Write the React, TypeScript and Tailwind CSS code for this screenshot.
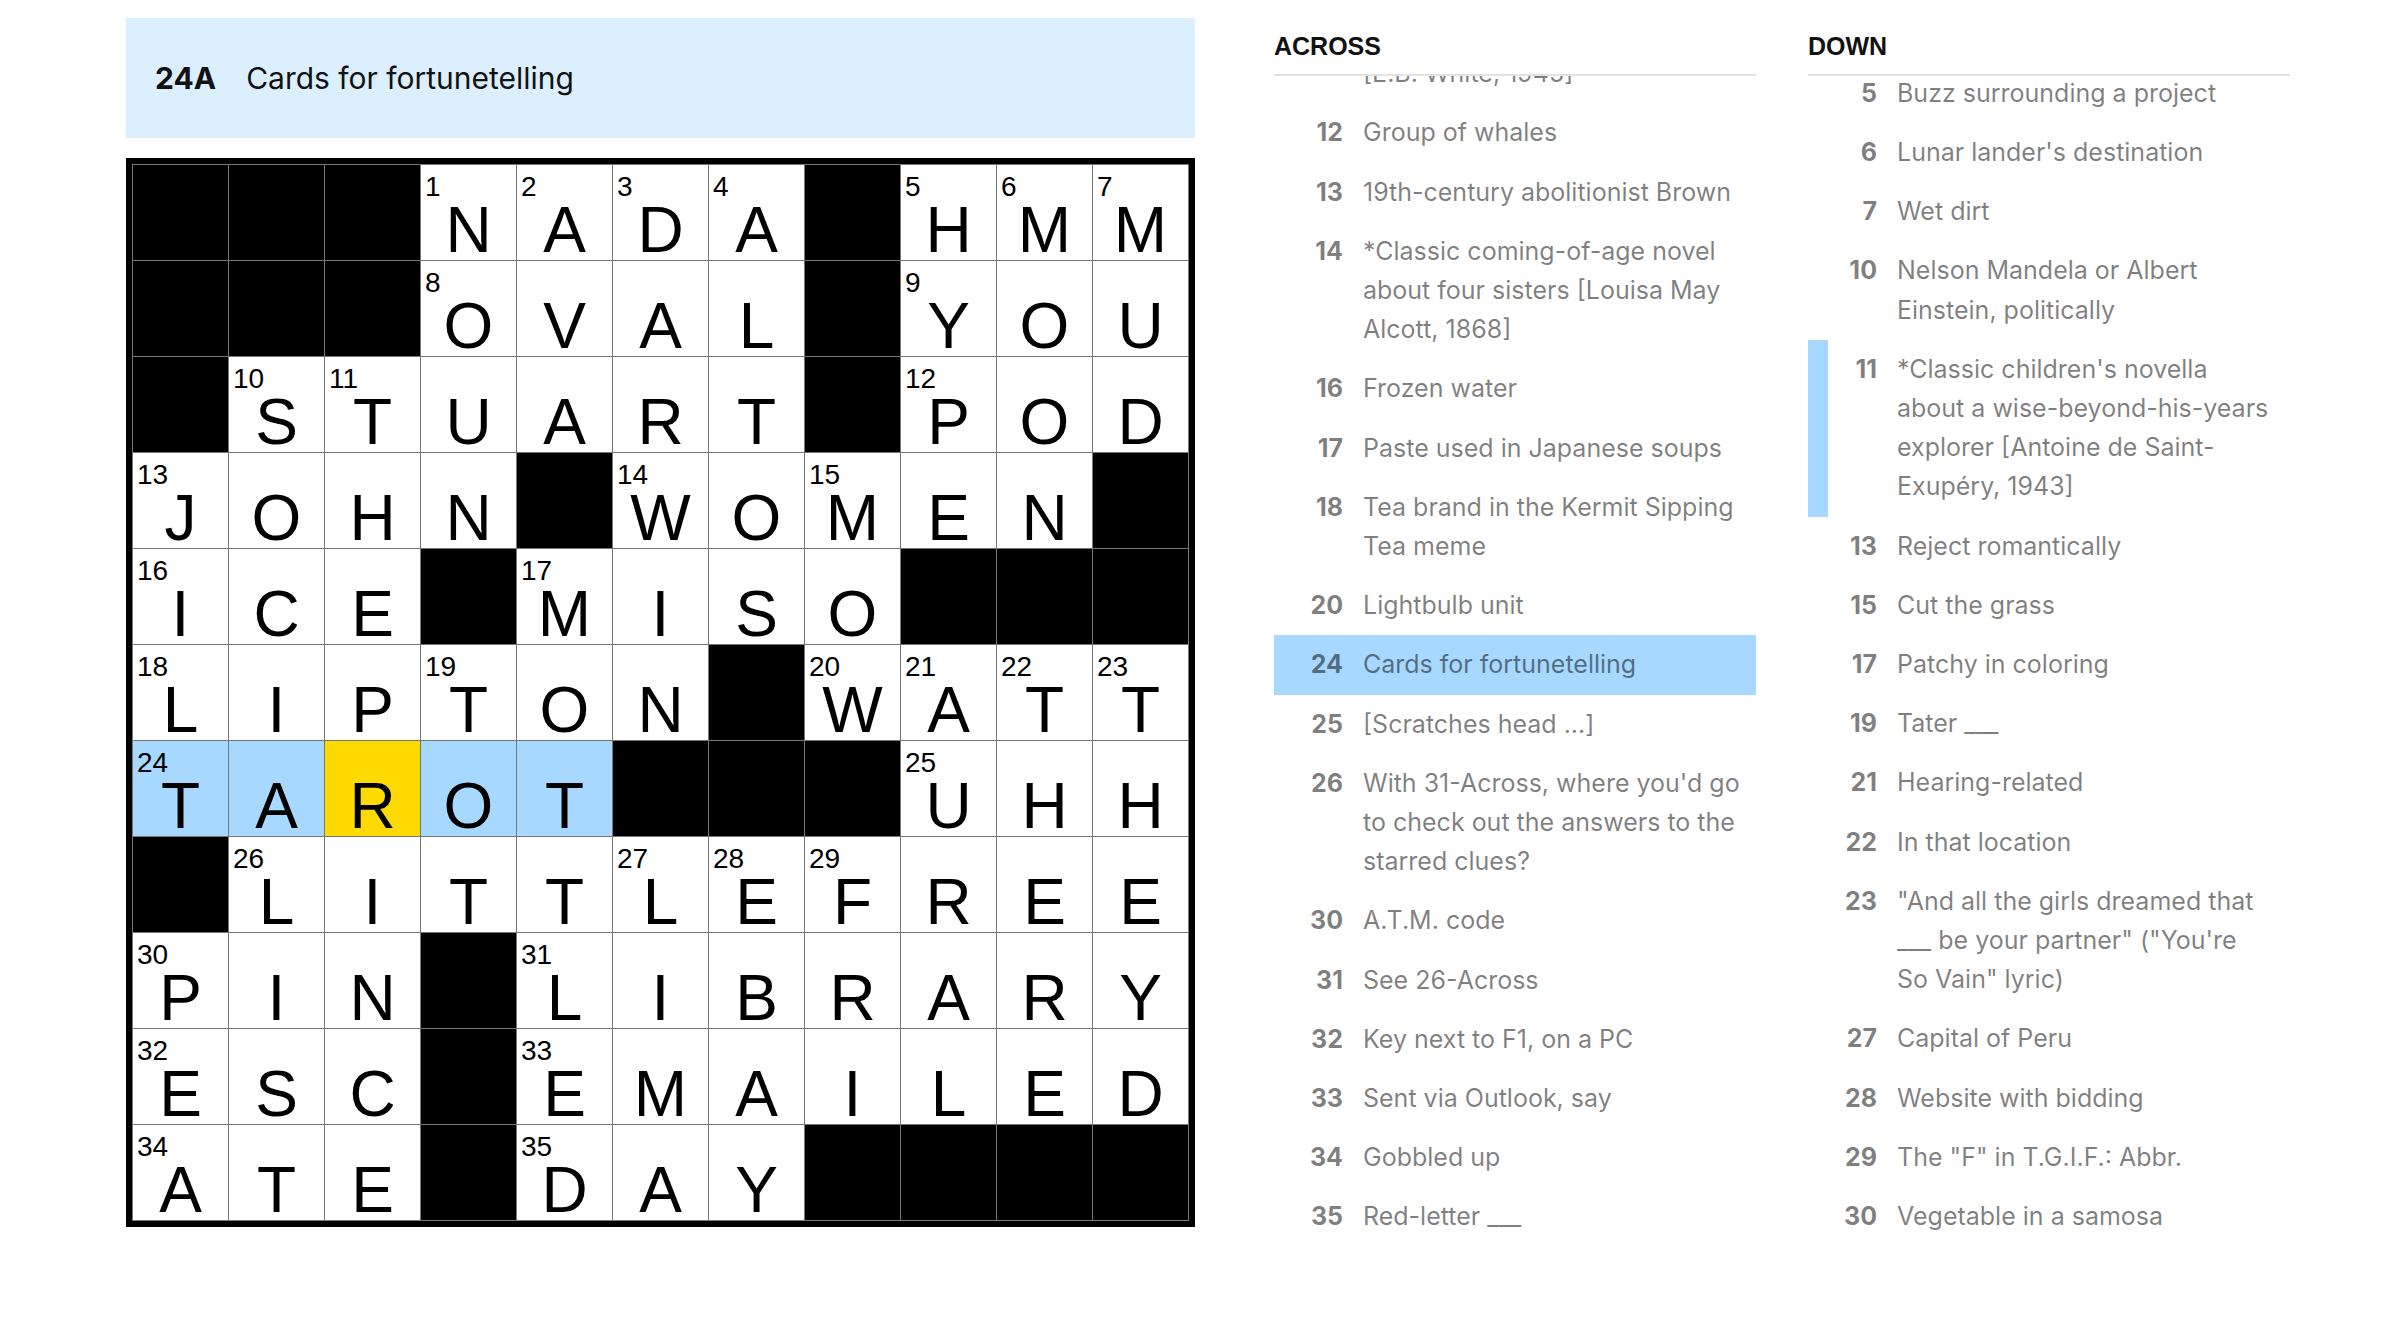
import { useLayoutEffect, useRef } from "react";

const rows = [
  "###NADA#HMM",
  "###OVAL#YOU",
  "#STUART#POD",
  "JOHN#WOMEN#",
  "ICE#MISO###",
  "LIPTON#WATT",
  "TAROT###UHH",
  "#LITTLEFREE",
  "PIN#LIBRARY",
  "ESC#EMAILED",
  "ATE#DAY####",
];

const across: [number, string][] = [
  [1, "Zilch"],
  [5, "\"Let me think ...\""],
  [8, "Egg shape"],
  [9, "\"Thank ___!\""],
  [10, "*Classic children's novel about a mouse born to a human family [E.B. White, 1945]"],
  [12, "Group of whales"],
  [13, "19th-century abolitionist Brown"],
  [14, "*Classic coming-of-age novel about four sisters [Louisa May Alcott, 1868]"],
  [16, "Frozen water"],
  [17, "Paste used in Japanese soups"],
  [18, "Tea brand in the Kermit Sipping Tea meme"],
  [20, "Lightbulb unit"],
  [24, "Cards for fortunetelling"],
  [25, "[Scratches head ...]"],
  [26, "With 31-Across, where you'd go to check out the answers to the starred clues?"],
  [30, "A.T.M. code"],
  [31, "See 26-Across"],
  [32, "Key next to F1, on a PC"],
  [33, "Sent via Outlook, say"],
  [34, "Gobbled up"],
  [35, "Red-letter ___"],
];

const down: [number, string][] = [
  [1, "Person, place or thing"],
  [2, "Actress Gardner"],
  [3, "Naturalist Charles"],
  [4, "Choir voices"],
  [5, "Buzz surrounding a project"],
  [6, "Lunar lander's destination"],
  [7, "Wet dirt"],
  [10, "Nelson Mandela or Albert Einstein, politically"],
  [11, "*Classic children's novella about a wise-beyond-his-years explorer [Antoine de Saint-Exupéry, 1943]"],
  [13, "Reject romantically"],
  [15, "Cut the grass"],
  [17, "Patchy in coloring"],
  [19, "Tater ___"],
  [21, "Hearing-related"],
  [22, "In that location"],
  [23, "\"And all the girls dreamed that ___ be your partner\" (\"You're So\u00a0Vain\" lyric)"],
  [27, "Capital of Peru"],
  [28, "Website with bidding"],
  [29, "The \"F\" in T.G.I.F.: Abbr."],
  [30, "Vegetable in a samosa"],
];

const isBlack = (r: number, c: number) =>
  r < 0 || c < 0 || r > 10 || c > 10 || rows[r][c] === "#";

// standard numbering: a white square starting an across or down entry
function buildNumbers() {
  const nums: Record<string, number> = {};
  let n = 0;
  for (let r = 0; r < 11; r++) {
    for (let c = 0; c < 11; c++) {
      if (isBlack(r, c)) continue;
      const startsAcross = isBlack(r, c - 1) && !isBlack(r, c + 1);
      const startsDown = isBlack(r - 1, c) && !isBlack(r + 1, c);
      if (startsAcross || startsDown) nums[`${r}-${c}`] = ++n;
    }
  }
  return nums;
}

const numbers = buildNumbers();

function Cell({ r, c }: { r: number; c: number }) {
  if (isBlack(r, c)) return <div className="h-[95px] w-[95px] bg-black" />;

  const selected = r === 6 && c === 2;
  const inWord = r === 6 && c <= 4;
  const bg = selected ? "bg-[#ffda00]" : inWord ? "bg-[#a7d8ff]" : "bg-white";
  const num = numbers[`${r}-${c}`];

  return (
    <div className={`relative flex h-[95px] w-[95px] items-end justify-center ${bg}`}>
      {num && (
        <span className="absolute left-[4px] top-[8px] text-[28px] leading-none">{num}</span>
      )}
      <span className="text-[64px] leading-[60px]">{rows[r][c]}</span>
    </div>
  );
}

function ClueList({
  title,
  clues,
  active,
  crossed,
  anchor,
  offset,
}: {
  title: string;
  clues: [number, string][];
  active?: number;
  crossed?: number;
  anchor: number;
  offset: number;
}) {
  const boxRef = useRef<HTMLDivElement>(null);
  const anchorRef = useRef<HTMLLIElement>(null);

  useLayoutEffect(() => {
    if (boxRef.current && anchorRef.current) {
      boxRef.current.scrollTop = anchorRef.current.offsetTop + offset;
    }
  }, [offset]);

  return (
    <div className="w-[482px] shrink-0">
      <h3 className="border-b-2 border-[#e2e2e2] pb-[15px] pt-[16px] text-[25px] font-bold leading-[25px]">
        {title}
      </h3>
      <div ref={boxRef} className="relative h-[1170px] overflow-hidden">
        <ul className="font-['Inter',sans-serif] text-[25px] leading-[39.2px] text-black/50">
          {clues.map(([num, text]) => {
            const isActive = num === active;
            const isCrossed = num === crossed;
            return (
              <li
                key={num}
                ref={num === anchor ? anchorRef : undefined}
                className={`flex border-l-[20px] py-[10px] pr-[13px] ${
                  isActive
                    ? "border-transparent bg-[#a7d8ff]"
                    : isCrossed
                    ? "border-[#a7d8ff]"
                    : "border-transparent"
                }`}
              >
                <span className="w-[49px] shrink-0 text-right font-bold">{num}</span>
                <span className="ml-[20px]">{text}</span>
              </li>
            );
          })}
        </ul>
      </div>
    </div>
  );
}

export default function App() {
  return (
    <div className="flex h-[1330px] overflow-hidden bg-white pl-[126px] pt-[18px] font-['Liberation_Sans',Arial,sans-serif] text-[#121212]">
      <div className="w-[1069px] shrink-0">
        {/* current clue bar */}
        <div className="flex h-[120px] items-center bg-[#dcefff] pl-[29px] font-['Inter',sans-serif] text-[30px]">
          <span className="font-bold">24A</span>
          <span className="ml-[30px]">Cards for fortunetelling</span>
        </div>

        {/* board */}
        <div className="mt-[20px] border-[6px] border-black bg-[#767676] p-px text-black">
          <div className="grid grid-cols-[repeat(11,95px)] gap-px">
            {rows.map((row, r) =>
              row.split("").map((_, c) => <Cell key={`${r}-${c}`} r={r} c={c} />)
            )}
          </div>
        </div>
      </div>

      <div className="ml-[79px] flex gap-[52px]">
        <ClueList title="ACROSS" clues={across} active={24} anchor={12} offset={-27} />
        <ClueList title="DOWN" clues={down} crossed={11} anchor={5} offset={17} />
      </div>
    </div>
  );
}
